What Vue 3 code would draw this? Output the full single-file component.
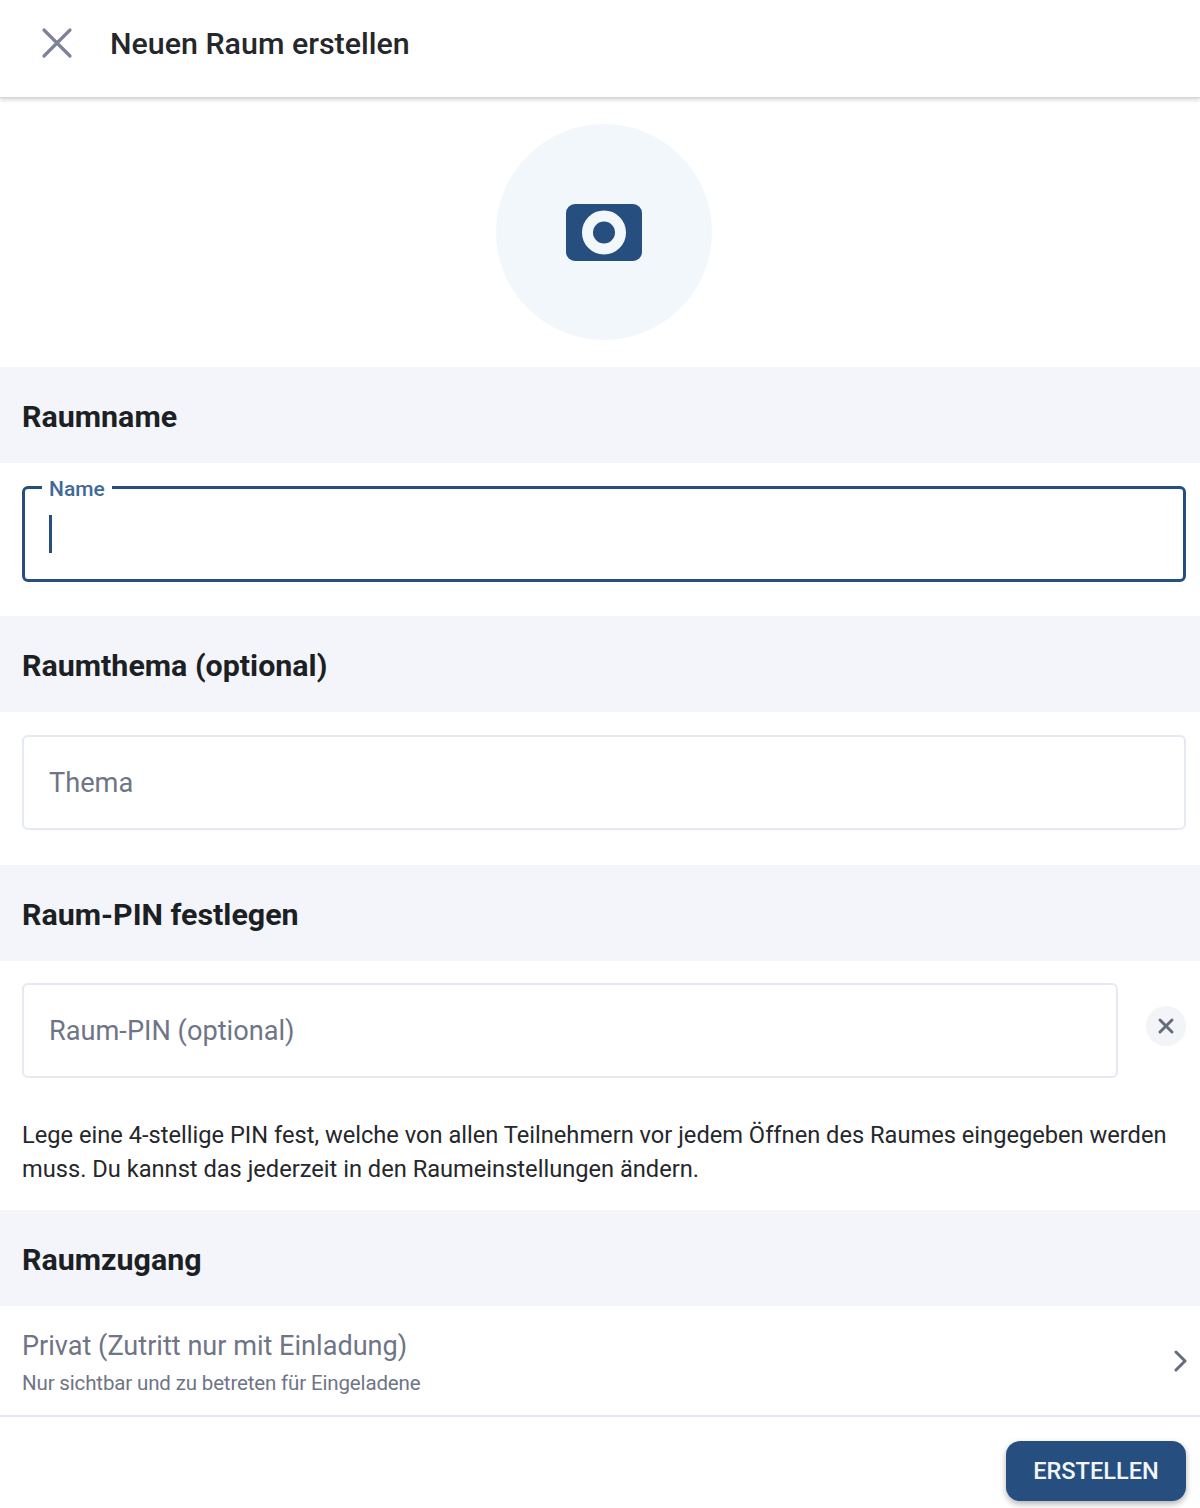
<script setup>
const sections = {
  name: 'Raumname',
  topic: 'Raumthema (optional)',
  pin: 'Raum-PIN festlegen',
  access: 'Raumzugang',
}
</script>

<template>
  <div class="page">
    <header class="topbar">
      <svg class="close" width="32" height="32" viewBox="0 0 32 32">
        <path d="M3 3 L29 29 M29 3 L3 29" stroke="#7c8297" stroke-width="3.2" stroke-linecap="round" fill="none" />
      </svg>
      <h1>Neuen Raum erstellen</h1>
    </header>

    <div class="avatar-wrap">
      <div class="avatar">
        <svg width="76" height="57" viewBox="0 0 76 57">
          <rect width="76" height="57" rx="9" fill="#264f80" />
          <circle cx="38" cy="28.5" r="16.5" fill="none" stroke="#f2f7fc" stroke-width="11" />
        </svg>
      </div>
    </div>

    <div class="band">{{ sections.name }}</div>
    <div class="field-row first">
      <fieldset class="field active">
        <legend>Name</legend>
        <span class="caret"></span>
      </fieldset>
    </div>

    <div class="band">{{ sections.topic }}</div>
    <div class="field-row">
      <div class="field">Thema</div>
    </div>

    <div class="band">{{ sections.pin }}</div>
    <div class="field-row pin">
      <div class="field">Raum-PIN (optional)</div>
      <button class="clear">
        <svg width="18" height="18" viewBox="0 0 18 18">
          <path d="M3 3 L15 15 M15 3 L3 15" stroke="#666c7f" stroke-width="3" stroke-linecap="round" fill="none" />
        </svg>
      </button>
    </div>
    <p class="hint">Lege eine 4-stellige PIN fest, welche von allen Teilnehmern vor jedem Öffnen des Raumes eingegeben werden muss. Du kannst das jederzeit in den Raumeinstellungen ändern.</p>

    <div class="band">{{ sections.access }}</div>
    <div class="access">
      <div class="access-text">
        <div class="access-title">Privat (Zutritt nur mit Einladung)</div>
        <div class="access-sub">Nur sichtbar und zu betreten für Eingeladene</div>
      </div>
      <svg width="14" height="22" viewBox="0 0 14 22">
        <path d="M2 2 L11 11 L2 20" stroke="#666c7f" stroke-width="3" stroke-linecap="round" stroke-linejoin="round" fill="none" />
      </svg>
    </div>

    <footer class="actions">
      <button class="create">ERSTELLEN</button>
    </footer>
  </div>
</template>

<style>
html, body { background: #fff; }
</style>

<style scoped>
.page {
  width: 1200px;
  height: 1508px;
  overflow: hidden;
  font-family: Roboto, "Liberation Sans", sans-serif;
  color: #1c1f24;
  background: #fff;
}

.topbar {
  height: 98px;
  display: flex;
  align-items: center;
  padding-left: 41px;
  box-sizing: border-box;
  padding-bottom: 11px;
  border-bottom: 1px solid #d4d5d8;
  box-shadow: 0 2px 4px rgba(0, 0, 0, .16);
}

.close { margin-right: 37px; }

.topbar h1 {
  margin: 0;
  font-size: 30.4px;
  font-weight: 500;
  color: #25272b;
}

.avatar-wrap {
  height: 269px;
  display: flex;
  justify-content: center;
  padding: 26px 0 0 8px;
  box-sizing: border-box;
}

.avatar {
  width: 216px;
  height: 216px;
  border-radius: 50%;
  background: #f2f7fc;
  display: flex;
  align-items: center;
  justify-content: center;
}

.band {
  height: 96px;
  padding: 3px 0 0 22px;
  box-sizing: border-box;
  display: flex;
  align-items: center;
  background: #f3f5fa;
  font-size: 30.4px;
  font-weight: 700;
}

.field-row {
  height: 153px;
  padding: 23px 14px 0 22px;
  box-sizing: border-box;
  display: flex;
}

.field-row.first {
  padding-top: 12px;
}

.field {
  flex: 1;
  height: 95px;
  margin: 0;
  padding: 0 0 0 25px;
  box-sizing: border-box;
  border: 2px solid #e4e9f2;
  border-radius: 6px;
  display: flex;
  align-items: center;
  font-size: 27.2px;
  color: #6f7587;
}

.field.active {
  display: block;
  height: 107px;
  border: 3px solid #264f80;
  padding-left: 17px;
}

.field legend {
  position: relative;
  top: 2px;
  padding: 0 7px;
  font-size: 21px;
  font-weight: 500;
  line-height: 24px;
  color: #3f6a9b;
}

.caret {
  display: block;
  width: 3px;
  height: 38px;
  margin: 16px 0 0 7px;
  background: #264f80;
}

.field-row.pin {
  height: auto;
  padding-top: 22px;
  align-items: center;
}

.clear {
  width: 40px;
  height: 40px;
  margin-left: 28px;
  margin-top: -10px;
  padding: 0;
  border: 0;
  border-radius: 50%;
  background: #f3f4f8;
  display: flex;
  align-items: center;
  justify-content: center;
}

.hint {
  margin: 41px 14px 24px 22px;
  font-size: 23.65px;
  line-height: 33.5px;
  color: #25272b;
}

.access {
  height: 111px;
  padding: 0 12px 0 22px;
  box-sizing: border-box;
  border-bottom: 2px solid #e4e9f2;
  display: flex;
  align-items: center;
  justify-content: space-between;
}

.access-text {
  margin-top: 4px;
}

.access-title {
  font-size: 27.1px;
  line-height: 36px;
  color: #6f7587;
}

.access-sub {
  margin-top: 5px;
  font-size: 20.5px;
  letter-spacing: -.15px;
  line-height: 28px;
  color: #6f7587;
}

.actions {
  display: flex;
  justify-content: flex-end;
  padding: 24px 14px 0 0;
}

.create {
  width: 180px;
  height: 60px;
  padding-bottom: 2px;
  border: 0;
  border-radius: 14px;
  background: #264f80;
  color: #f2f5f9;
  font-family: inherit;
  font-size: 23.6px;
  font-weight: 500;
  box-shadow: 0 3px 6px rgba(0, 0, 0, .3);
}
</style>
